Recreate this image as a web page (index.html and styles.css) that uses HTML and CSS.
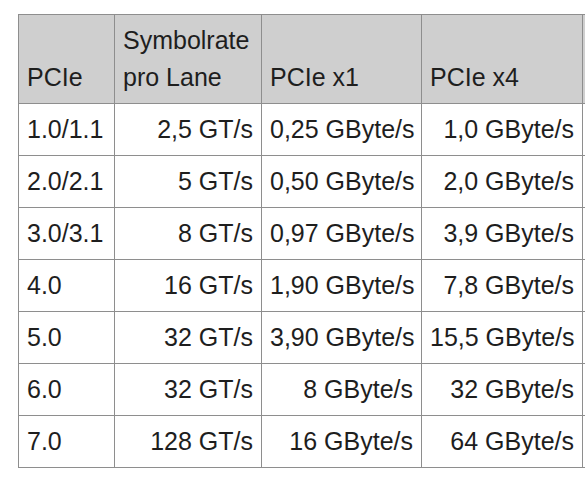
FILE: index.html
```html
<!DOCTYPE html>
<html lang="de">
<head>
<meta charset="utf-8">
<link rel="stylesheet" href="styles.css">
</head>
<body>
<table class="pcie">
  <colgroup>
    <col class="c1"><col class="c2"><col class="c3"><col class="c4"><col class="c5">
  </colgroup>
  <thead>
    <tr>
      <th>PCIe</th>
      <th>Symbolrate<br>pro Lane</th>
      <th>PCIe x1</th>
      <th>PCIe x4</th>
      <th class="edge"></th>
    </tr>
  </thead>
  <tbody>
    <tr><td>1.0/1.1</td><td class="num">2,5 GT/s</td><td class="num">0,25 GByte/s</td><td class="num">1,0 GByte/s</td><td class="edge"></td></tr>
    <tr><td>2.0/2.1</td><td class="num">5 GT/s</td><td class="num">0,50 GByte/s</td><td class="num">2,0 GByte/s</td><td class="edge"></td></tr>
    <tr><td>3.0/3.1</td><td class="num">8 GT/s</td><td class="num">0,97 GByte/s</td><td class="num">3,9 GByte/s</td><td class="edge"></td></tr>
    <tr><td>4.0</td><td class="num">16 GT/s</td><td class="num">1,90 GByte/s</td><td class="num">7,8 GByte/s</td><td class="edge"></td></tr>
    <tr><td>5.0</td><td class="num">32 GT/s</td><td class="num">3,90 GByte/s</td><td class="num">15,5 GByte/s</td><td class="edge"></td></tr>
    <tr><td>6.0</td><td class="num">32 GT/s</td><td class="num">8 GByte/s</td><td class="num">32 GByte/s</td><td class="edge"></td></tr>
    <tr><td>7.0</td><td class="num">128 GT/s</td><td class="num">16 GByte/s</td><td class="num">64 GByte/s</td><td class="edge"></td></tr>
  </tbody>
</table>
</body>
</html>
```
FILE: styles.css
```css
html, body {
  margin: 0;
  padding: 0;
  background: #ffffff;
  overflow: hidden;
}
body {
  width: 585px;
  height: 480px;
}
.pcie {
  margin: 14px 0 0 18px;
  border-collapse: collapse;
  table-layout: fixed;
  width: 567px;
  font-family: "Liberation Sans", Arial, sans-serif;
  font-size: 25px;
  line-height: 37px;
  color: #1e1e1e;
}
.c1 { width: 96px; }
.c2 { width: 147px; }
.c3 { width: 160px; }
.c4 { width: 161px; }
.c5 { width: 3px; }
.pcie th,
.pcie td {
  border: 1px solid #8e8e8e;
  padding: 7px 8px;
  white-space: nowrap;
}
.pcie th {
  background: #cfcfcf;
  font-weight: normal;
  text-align: left;
  vertical-align: bottom;
}
.pcie td {
  text-align: left;
  vertical-align: middle;
}
.pcie td.num {
  text-align: right;
}
.pcie td.num.wide {
  padding-right: 9px;
}
.pcie .edge {
  padding: 0;
  border-right: none;
}
```
